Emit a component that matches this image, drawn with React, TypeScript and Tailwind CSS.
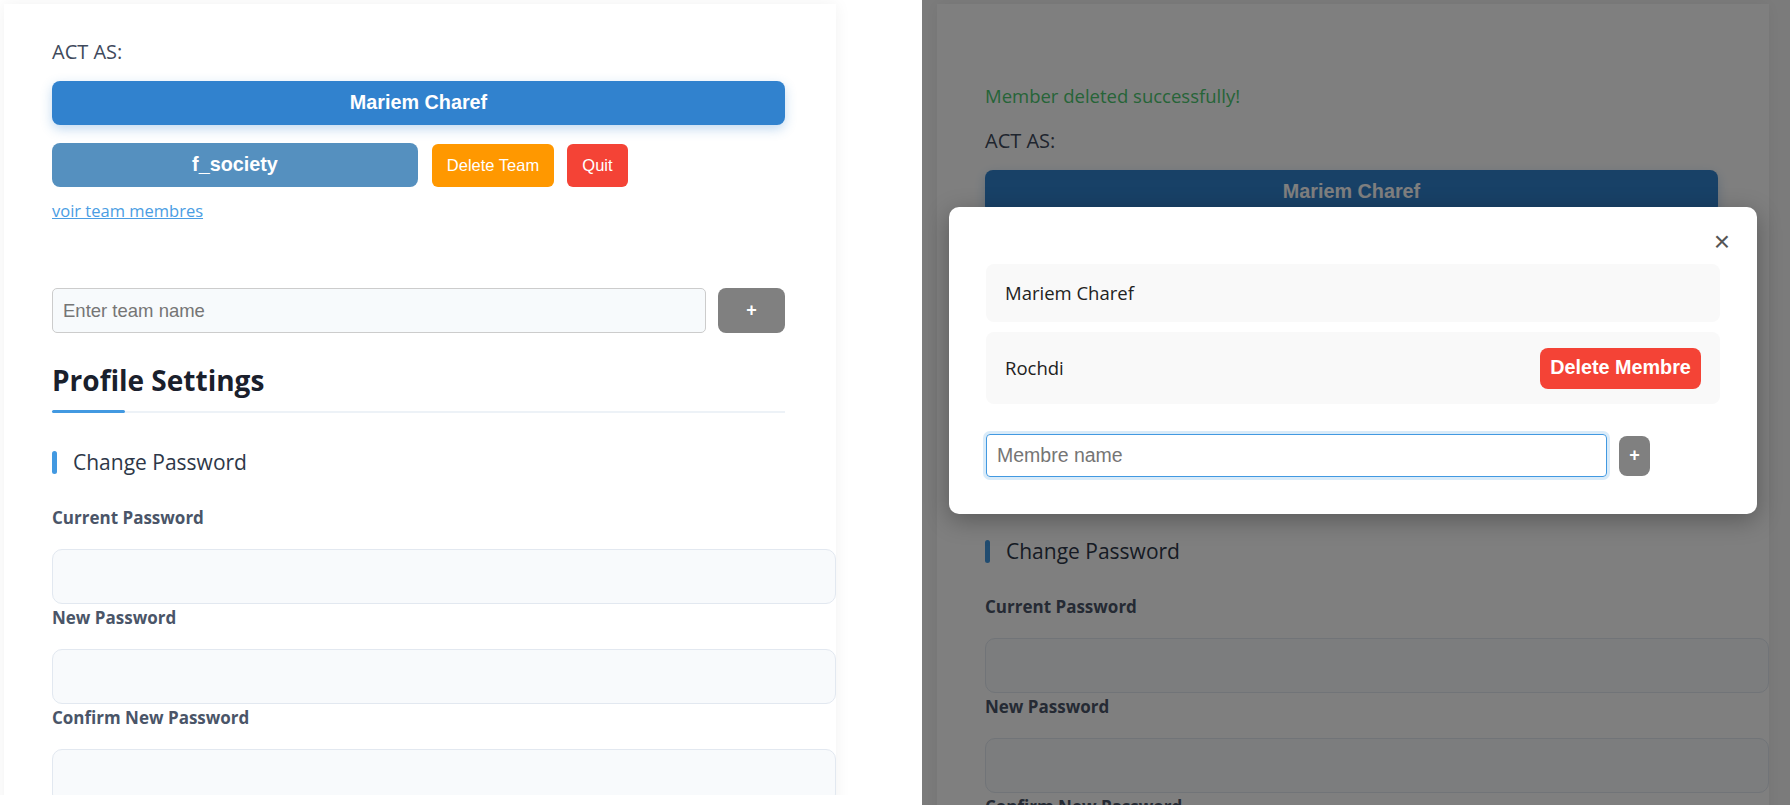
import React from "react";

function ProfileCard({ message }: { message?: string }) {
  return (
    <div
      className={`w-[832px] bg-white pb-10 pl-[48px] font-['Open_Sans',sans-serif] shadow-[0_0_16px_rgba(0,0,0,0.06)] ${
        message ? "pt-[79px]" : "pt-[34px]"
      }`}
    >
      {message && (
        <p className="mb-[18px] text-[18.5px] leading-[26px] text-[#4cc970]">{message}</p>
      )}
      <p className="text-[20px] font-medium leading-[28px] text-[#3f4a5c]">ACT AS:</p>
      <button className="mt-[15px] block h-[44px] w-[733px] rounded-lg bg-[#3182ce] font-['Liberation_Sans',Arial,sans-serif] text-[19.8px] font-bold text-white shadow-[0_4px_12px_rgba(49,130,206,0.3)]">
        Mariem Charef
      </button>
      <div className="mt-[18px] flex items-center font-['Liberation_Sans',Arial,sans-serif]">
        <button className="h-[44px] w-[366px] rounded-lg bg-[#5590bf] text-[19.8px] font-bold text-white">
          f_society
        </button>
        <button className="ml-[14px] h-[43px] w-[122px] rounded-md bg-[#ff9800] text-[16.5px] text-white">
          Delete Team
        </button>
        <button className="ml-[13px] h-[43px] w-[61px] rounded-md bg-[#f44336] text-[16.5px] text-white">
          Quit
        </button>
      </div>
      <a className="mt-[12px] block w-fit cursor-pointer text-[16.5px] leading-[24px] text-[#4a9de3] underline">
        voir team membres
      </a>

      <div className="mt-[65px] flex items-center">
        <input
          placeholder="Enter team name"
          className="h-[45px] w-[654px] rounded-[5px] border border-[#cccccc] bg-[#f7fafc] px-[10px] font-['Liberation_Sans',Arial,sans-serif] text-[18.5px] outline-none placeholder:text-[#757575]"
        />
        <button className="ml-[12px] h-[45px] w-[67px] rounded-lg bg-[#808080] font-['Liberation_Sans',Arial,sans-serif] text-[18px] font-bold text-white">
          +
        </button>
      </div>

      <h2 className="mt-[28px] text-[28px] font-bold leading-[38px] text-[#1a202c]">Profile Settings</h2>
      <div className="mt-[11px] flex w-[733px] items-center">
        <div className="h-[3px] w-[73px] rounded-full bg-[#4299e1]" />
        <div className="h-[2px] flex-1 bg-[#edf2f7]" />
      </div>

      <div className="mt-[35px] flex items-center">
        <div className="h-[23px] w-[5px] rounded-full bg-[#4299e1]" />
        <h3 className="ml-[16px] text-[21px] font-medium leading-[28px] text-[#2d3748]">Change Password</h3>
      </div>

      {["Current Password", "New Password", "Confirm New Password"].map((label, i) => (
        <div key={label}>
          <label className={`block text-[17px] font-bold leading-[24px] text-[#4a5568] ${i === 0 ? "mt-[30px]" : "mt-[2px]"}`}>
            {label}
          </label>
          <input
            type="password"
            className="mt-[19px] block h-[55px] w-[784px] rounded-[10px] border border-[#e2e8f0] bg-[#f8fafc] outline-none"
          />
        </div>
      ))}
    </div>
  );
}

function MembersModal() {
  return (
    <div className="absolute left-[27px] top-[207px] w-[808px] rounded-[10px] bg-white px-[37px] pb-[37px] pt-[57px] font-['Open_Sans',sans-serif] shadow-[0_6px_24px_rgba(0,0,0,0.3)]">
      <button className="absolute right-[27px] top-[21px] font-['Liberation_Sans',Arial,sans-serif] text-[28px] leading-[28px] text-[#555]">
        ×
      </button>

      <div className="flex h-[58px] items-center rounded-lg bg-[#f9f9f9] px-[19px] text-[18.5px] text-[#222]">
        Mariem Charef
      </div>
      <div className="mt-[10px] flex h-[72px] items-center justify-between rounded-lg bg-[#f9f9f9] px-[19px] text-[18.5px] text-[#222]">
        <span>Rochdi</span>
        <button className="h-[41px] w-[161px] rounded-lg bg-[#f44336] font-['Liberation_Sans',Arial,sans-serif] text-[19.8px] font-bold text-white">
          Delete Membre
        </button>
      </div>

      <div className="mt-[30px] flex items-center">
        <input
          placeholder="Membre name"
          className="h-[43px] w-[621px] rounded-[4px] border border-[#4299e1] px-[10px] font-['Liberation_Sans',Arial,sans-serif] text-[19.5px] shadow-[0_0_0_3px_rgba(66,153,225,0.2)] outline-none placeholder:text-[#757575]"
        />
        <button className="ml-[12px] h-[40px] w-[31px] rounded-lg bg-[#808080] font-['Liberation_Sans',Arial,sans-serif] text-[18px] font-bold text-white">
          +
        </button>
      </div>
    </div>
  );
}

export default function App() {
  return (
    <div className="flex h-[805px] w-[1790px] overflow-hidden bg-white">
      <div className="h-[805px] w-[922px] shrink-0 bg-white">
        <div className="h-[795px] overflow-hidden pl-[4px] pt-[4px]">
          <ProfileCard />
        </div>
      </div>

      <div className="relative h-[805px] flex-1 overflow-hidden bg-[#f7f7f7]">
        <div className="pl-[15px] pt-[4px]">
          <ProfileCard message="Member deleted successfully!" />
        </div>
        <div className="absolute inset-0 bg-black/50" />
        <MembersModal />
      </div>
    </div>
  );
}
